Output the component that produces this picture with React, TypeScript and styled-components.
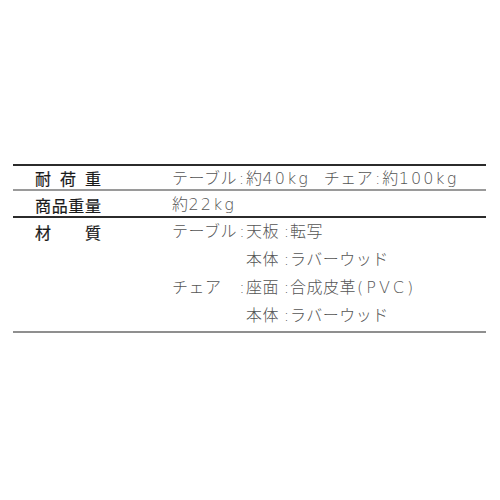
import { Fragment } from "react";
import styled, { createGlobalStyle } from "styled-components";

const GlobalStyle = createGlobalStyle`
  html, body {
    margin: 0;
    padding: 0;
    background: #fff;
  }
  body {
    font-family: "DejaVu Sans", "Noto Sans CJK JP", sans-serif;
  }
`;

const SpecTable = styled.div`
  margin: 164px 14px 0 13px;
  border-top: 2px solid #2b2b2b;
  border-bottom: 2px solid #8f8f8f;
`;

const Row = styled.div<{ $divider?: "dark" | "gray"; $pad: number; $lh: number }>`
  display: grid;
  grid-template-columns: 66px 1fr;
  column-gap: 71px;
  padding: ${(p) => p.$pad}px 0 0 22px;
  line-height: ${(p) => p.$lh}px;
  border-bottom: ${(p) =>
    p.$divider === "gray"
      ? "2px solid #9a9a9a"
      : p.$divider === "dark"
      ? "2px solid #2b2b2b"
      : "none"};
`;

const Label = styled.div`
  font-family: "Noto Sans CJK JP", sans-serif;
  font-size: 16px;
  font-weight: 400;
  color: #1a1a1a;
  text-align: justify;
  text-align-last: justify;
  white-space: nowrap;
  -webkit-text-stroke: 0.2px #1a1a1a;
`;

const Value = styled.div`
  font-size: 16px;
  font-weight: 300;
  color: #555;
  letter-spacing: 0.5px;
  white-space: nowrap;
`;

const Colon = styled.span<{ $w?: number }>`
  display: inline-block;
  width: ${(p) => p.$w ?? 9}px;
  text-align: center;
  letter-spacing: 0;
`;

const Item = styled.span<{ $gap?: number }>`
  margin-left: ${(p) => p.$gap ?? 0}px;
`;

const Num = styled.span`
  letter-spacing: 2px;
`;

const MaterialGrid = styled.div`
  display: grid;
  grid-template-columns: 66px 8px 37px 7px auto;
  font-size: 16px;
  font-weight: 300;
  color: #555;
  letter-spacing: 0.5px;
  white-space: nowrap;
  padding-bottom: 1px;
`;

const Cell = styled.span``;

const ColonCell = styled.span`
  text-align: center;
  letter-spacing: 0;
`;

const Paren = styled.span`
  letter-spacing: 3px;
  margin-left: 1px;
`;

const materials = [
  { part: "テーブル", colon: true, sub: "天板", value: <>転写</> },
  { part: "", colon: false, sub: "本体", value: <>ラバーウッド</> },
  {
    part: "チェア",
    colon: true,
    sub: "座面",
    value: (
      <>
        合成皮革<Paren>(PVC)</Paren>
      </>
    ),
  },
  { part: "", colon: false, sub: "本体", value: <>ラバーウッド</> },
];

export default function App() {
  return (
    <>
      <GlobalStyle />
      <SpecTable>
        <Row $divider="gray" $pad={2} $lh={21}>
          <Label>耐荷重</Label>
          <Value>
            <Item>テーブル</Item>
            <Colon>:</Colon>
            <Item>
              約<Num>40kg</Num>
            </Item>
            <Item $gap={14}>チェア</Item>
            <Colon>:</Colon>
            <Item>
              約<Num>100kg</Num>
            </Item>
          </Value>
        </Row>
        <Row $divider="dark" $pad={3} $lh={22}>
          <Label>商品重量</Label>
          <Value>
            約<Num>22kg</Num>
          </Value>
        </Row>
        <Row $pad={0} $lh={28}>
          <Label>材質</Label>
          <MaterialGrid>
            {materials.map((m, i) => (
              <Fragment key={i}>
                <Cell>{m.part}</Cell>
                <ColonCell>{m.colon ? ":" : ""}</ColonCell>
                <Cell>{m.sub}</Cell>
                <ColonCell>:</ColonCell>
                <Cell>{m.value}</Cell>
              </Fragment>
            ))}
          </MaterialGrid>
        </Row>
      </SpecTable>
    </>
  );
}
